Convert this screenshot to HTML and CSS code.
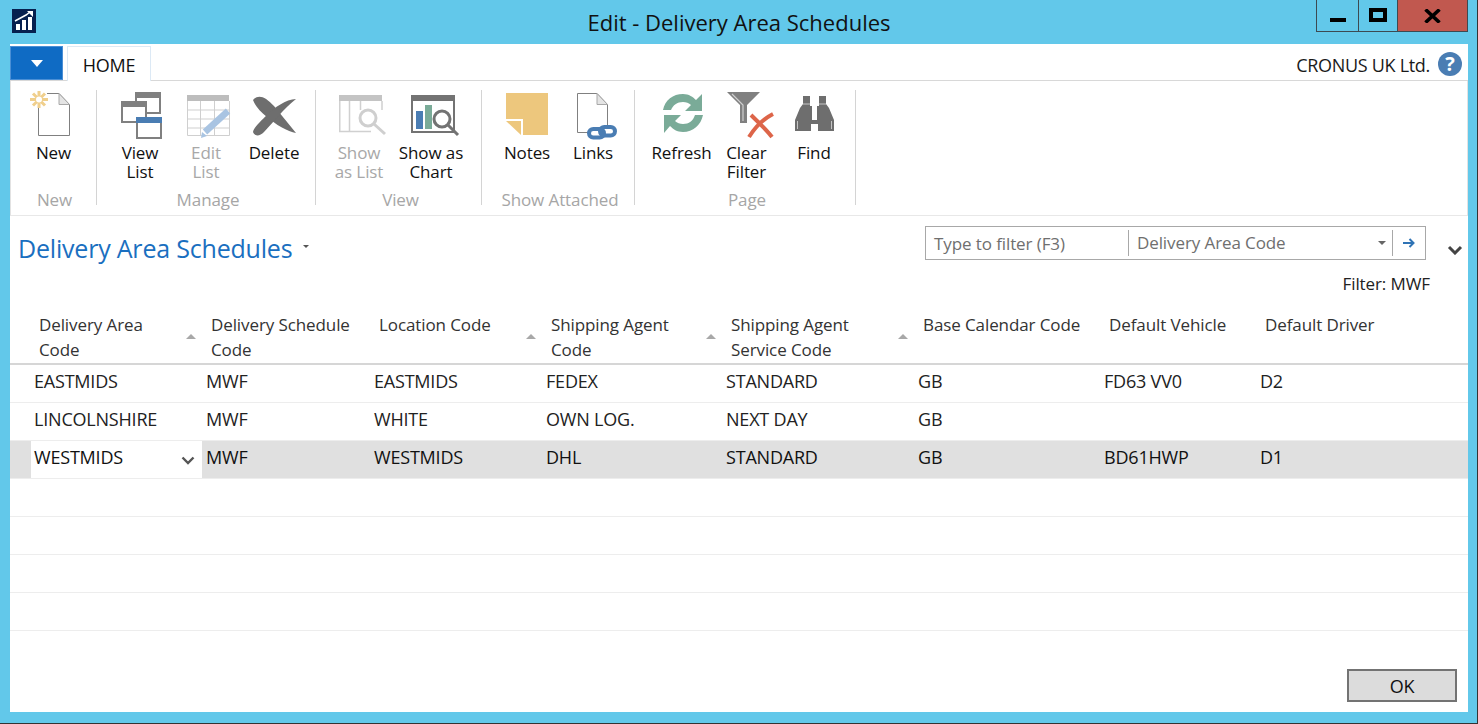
FILE: index.html
```html
<!DOCTYPE html>
<html lang="en">
<head>
  <meta charset="UTF-8" />
  <title>Edit - Delivery Area Schedules</title>
  <link rel="stylesheet" href="styles.css">
</head>
<body>

  <!-- Title bar -->
  <header class="titlebar">
    <svg class="app-icon" width="24" height="24" viewBox="0 0 24 24">
      <rect width="24" height="24" fill="#06204f"/>
      <path d="M4 21v-6h4v6zM10 21V11h4v10zM16 21V8h4v13z" fill="#fff"/>
      <path d="M3 12L14 6l4-3" fill="none" stroke="#fff" stroke-width="1.5"/>
      <path d="M15 2h6v6z" fill="#fff"/>
    </svg>
    <h1 class="title">Edit - Delivery Area Schedules</h1>
    <div class="win-controls">
      <div class="win-btn win-min"><span class="min-glyph"></span></div>
      <div class="win-btn win-max"><span class="max-glyph"></span></div>
      <div class="win-btn win-close">
        <svg width="17" height="14" viewBox="0 0 17 14"><path d="M1.500 0.500L15.500 13.500M15.500 0.500L1.500 13.500" stroke="#000" stroke-width="3.600" fill="none"/></svg>
      </div>
    </div>
  </header>

  <div class="window">

    <!-- Tabs -->
    <div class="tabs">
      <div class="app-btn"><span class="app-caret"></span></div>
      <div class="tab">HOME</div>
      <div class="company">CRONUS UK Ltd.</div>
      <div class="help">?</div>
    </div>

    <!-- Ribbon -->
    <div class="ribbon">

      <section class="group group-new">
        <div class="actions">
          <div class="action">
            <svg class="icon" width="48" height="48" viewBox="0 0 48 48">
              <path d="M8.500 14V45.500H39.500V14.500L29 3.500H17" fill="#fff" stroke="#808080"/>
              <path d="M29 3.500V14.500H39.500z" fill="#e4e4e4" stroke="#a8a8a8"/>
              <g stroke="#f0cf8c" stroke-width="3" fill="none">
                <path d="M9 1V18M0 9.500H18M3 3.500L15 15.500M15 3.500L3 15.500"/>
              </g>
              <circle cx="9" cy="9.500" r="3" fill="#fff"/>
            </svg>
            <span class="label">New</span>
          </div>
        </div>
        <div class="group-name">New</div>
      </section>

      <section class="group group-manage">
        <div class="actions">
          <div class="action action-view">
            <svg class="icon" width="48" height="48" viewBox="0 0 48 48">
              <rect x="20" y="3" width="24" height="20" fill="#fff" stroke="#808080" stroke-width="2"/>
              <rect x="19" y="2" width="26" height="6" fill="#808080"/>
              <rect x="6" y="12" width="24" height="20" fill="#fff" stroke="#808080" stroke-width="2"/>
              <rect x="5" y="11" width="26" height="6" fill="#808080"/>
              <rect x="21" y="28" width="24" height="20" fill="#fff" stroke="#808080" stroke-width="2"/>
              <rect x="20" y="27" width="26" height="6" fill="#4a7db3"/>
            </svg>
            <span class="label">View<br>List</span>
          </div>
          <div class="action action-edit off">
            <svg class="icon" width="48" height="48" viewBox="0 0 48 48">
              <rect x="5" y="5" width="42" height="6" fill="#bdbdbd"/>
              <path d="M5.500 11V45.500H47.500V11M5.500 20H47.500M5.500 29H47.500M5.500 38H47.500M18.500 11V45.500M32.500 11V45.500" fill="none" stroke="#cfcfcf"/>
              <path d="M23 42L46 21" stroke="#a9c4e2" stroke-width="6.500" fill="none"/>
              <path d="M19 48l1-6 5 4z" fill="#a9c4e2"/>
            </svg>
            <span class="label">Edit<br>List</span>
          </div>
          <div class="action action-delete">
            <svg class="icon" width="48" height="48" viewBox="0 0 48 48">
              <path d="M3 10C8 4 15 6 24 16L46 43C38 42 25 34 17 27C11 22 5 16 3 10z" fill="#6e6e6e"/>
              <path d="M46 9C36 9 24 18 17 25C11 31 4 37 3 42C5 47 10 46 14 42C23 33 34 18 46 9z" fill="#6e6e6e"/>
            </svg>
            <span class="label">Delete</span>
          </div>
        </div>
        <div class="group-name">Manage</div>
      </section>

      <section class="group group-view">
        <div class="actions">
          <div class="action action-show off">
            <svg class="icon" width="48" height="48" viewBox="0 0 48 48">
              <rect x="4" y="5" width="43" height="6" fill="#c4c4c4"/>
              <path d="M4.750 11V41.500H36M47 11V20M14.500 11V41.500M25.500 11V20" fill="none" stroke="#d0d0d0" stroke-width="1.500"/>
              <circle cx="33" cy="28" r="8" fill="#fff" stroke="#cfcfcf" stroke-width="3"/>
              <path d="M39 34L50 44" stroke="#cfcfcf" stroke-width="3"/>
            </svg>
            <span class="label">Show<br>as List</span>
          </div>
          <div class="action action-chart">
            <svg class="icon" width="48" height="48" viewBox="0 0 48 48">
              <rect x="5" y="6" width="42" height="36" fill="#fff" stroke="#737373" stroke-width="2"/>
              <rect x="4" y="5" width="44" height="6" fill="#737373"/>
              <rect x="9" y="21" width="7" height="18" fill="#4a7db3"/>
              <rect x="18" y="15" width="7" height="24" fill="#7aab98"/>
              <circle cx="35" cy="29" r="8" fill="#fff" stroke="#737373" stroke-width="3"/>
              <path d="M41 35L51 45" stroke="#737373" stroke-width="3"/>
            </svg>
            <span class="label">Show as<br>Chart</span>
          </div>
        </div>
        <div class="group-name">View</div>
      </section>

      <section class="group group-attached">
        <div class="actions">
          <div class="action action-notes">
            <svg class="icon" width="48" height="48" viewBox="0 0 48 48">
              <path d="M3 3H45V45H20V29H3z" fill="#edc77d"/>
              <path d="M3 31H18V45z" fill="#edc77d"/>
            </svg>
            <span class="label">Notes</span>
          </div>
          <div class="action action-links">
            <svg class="icon" width="48" height="48" viewBox="0 0 48 48">
              <path d="M8.500 3.500H28L38.500 14.500V36M8.500 3.500V42.500H20" fill="#fff" stroke="#808080"/>
              <path d="M28 3.500V14.500H38.500z" fill="#e4e4e4" stroke="#a8a8a8"/>
              <rect x="20" y="39" width="15" height="8.500" rx="4.250" fill="none" stroke="#4a7db3" stroke-width="4"/>
              <rect x="31" y="37" width="15" height="8.500" rx="4.250" fill="none" stroke="#4a7db3" stroke-width="4"/>
            </svg>
            <span class="label">Links</span>
          </div>
        </div>
        <div class="group-name">Show Attached</div>
      </section>

      <section class="group group-page">
        <div class="actions">
          <div class="action action-refresh">
            <svg class="icon" width="48" height="48" viewBox="0 0 48 48">
              <path d="M5 20C7 10 15 4 25 4C31 4 35 7 38 10L44 4V21H27L33 15C31 13 28 12 25 12C19 12 15 15 13 20z" fill="#7aab98"/>
              <path d="M45 25C43 35 35 42 25 42C19 42 15 39 12 36L6 43V25H23L17 31C19 33 22 34 25 34C31 34 35 31 37 25z" fill="#7aab98"/>
            </svg>
            <span class="label">Refresh</span>
          </div>
          <div class="action action-clear">
            <svg class="icon" width="48" height="48" viewBox="0 0 48 48">
              <path d="M4 2H37L24 15V33H17V15z" fill="#808080"/>
              <path d="M9 4L20 15V31" fill="none" stroke="#cfcfcf" stroke-width="1.200"/>
              <path d="M26 47C31 39 40 29 50 24M28 25C35 32 43 39 49 47" stroke="#dd6549" stroke-width="4" fill="none"/>
            </svg>
            <span class="label">Clear<br>Filter</span>
          </div>
          <div class="action action-find">
            <svg class="icon" width="48" height="48" viewBox="0 0 48 48">
              <path d="M13 6H20V16H22V30H27V16H29V6H36V14L39 18L44 30V41H28V34H21V41H5V30L10 18L13 14z" fill="#6e6e6e"/>
              <path d="M7.500 31V39M41.500 31V39M13 14H20M29 14H36" stroke="#c4c4c4" stroke-width="1"/>
            </svg>
            <span class="label">Find</span>
          </div>
        </div>
        <div class="group-name">Page</div>
      </section>

    </div>

    <!-- Page heading and filter -->
    <div class="pagehead">
      <h2 class="heading">Delivery Area Schedules</h2>
      <span class="heading-caret"></span>
      <div class="filterbox">
        <div class="filter-input">Type to filter (F3)</div>
        <div class="filter-field">Delivery Area Code<span class="field-caret"></span></div>
        <div class="filter-go">
          <svg width="12" height="10" viewBox="0 0 12 10"><path d="M0 5H10M6.500 1L10.500 5L6.500 9" fill="none" stroke="#2f73b5" stroke-width="2"/></svg>
        </div>
      </div>
      <svg class="collapse" width="16" height="10" viewBox="0 0 16 10"><path d="M2 2L8 8L14 2" fill="none" stroke="#444" stroke-width="3"/></svg>
    </div>
    <div class="filter-note">Filter: MWF</div>

    <!-- List -->
    <div class="list">
      <div class="row head">
        <div></div>
        <div class="hcell">Delivery Area<br>Code<span class="sort"></span></div>
        <div class="hcell">Delivery Schedule<br>Code</div>
        <div class="hcell">Location Code<span class="sort"></span></div>
        <div class="hcell">Shipping Agent<br>Code<span class="sort"></span></div>
        <div class="hcell">Shipping Agent<br>Service Code<span class="sort"></span></div>
        <div class="hcell">Base Calendar Code</div>
        <div class="hcell">Default Vehicle</div>
        <div class="hcell">Default Driver</div>
      </div>
      <div class="row">
        <div></div><div class="cell">EASTMIDS</div><div class="cell">MWF</div><div class="cell">EASTMIDS</div><div class="cell">FEDEX</div><div class="cell">STANDARD</div><div class="cell">GB</div><div class="cell">FD63 VV0</div><div class="cell">D2</div>
      </div>
      <div class="row">
        <div></div><div class="cell">LINCOLNSHIRE</div><div class="cell">MWF</div><div class="cell">WHITE</div><div class="cell">OWN LOG.</div><div class="cell">NEXT DAY</div><div class="cell">GB</div><div class="cell"></div><div class="cell"></div>
      </div>
      <div class="row selected">
        <div></div>
        <div class="cell cell-edit">WESTMIDS
          <svg width="14" height="9" viewBox="0 0 14 9"><path d="M1.500 1.500L7 7L12.500 1.500" fill="none" stroke="#555" stroke-width="2.400"/></svg>
        </div>
        <div class="cell">MWF</div><div class="cell">WESTMIDS</div><div class="cell">DHL</div><div class="cell">STANDARD</div><div class="cell">GB</div><div class="cell">BD61HWP</div><div class="cell">D1</div>
      </div>
      <div class="row"></div>
      <div class="row"></div>
      <div class="row"></div>
      <div class="row"></div>
    </div>

    <div class="footer">
      <button class="ok" type="button">OK</button>
    </div>
  </div>

</body>
</html>
```

FILE: styles.css
```css
* { box-sizing: border-box; margin: 0; padding: 0; }
html, body { height: 724px; overflow: hidden; }
body {
  background: #62c8ea;
  border-right: 1px solid #333;
  border-bottom: 1px solid #333;
  font-family: "Open Sans", "Noto Sans", sans-serif;
  font-size: 17px;
  letter-spacing: -0.1px;
  color: #1a1a1a;
}

/* Title bar */
.titlebar { height: 44px; display: flex; padding-left: 12px; }
.app-icon { margin-top: 9px; }
.title {
  flex: 1;
  font-size: 22px;
  font-weight: 400;
  letter-spacing: 0;
  text-align: center;
  line-height: 45px;
  color: #111;
  padding-left: 126px;
}
.win-controls {
  display: flex;
  height: 32px;
  margin-right: 9px;
  border: 1px solid #3c4a52;
  border-top: 0;
}
.win-btn { display: flex; align-items: center; justify-content: center; border-left: 1px solid #3c4a52; }
.win-btn:first-child { border-left: 0; }
.win-min { width: 41px; }
.win-max { width: 39px; }
.win-close { width: 70px; background: #c1584f; }
.min-glyph { width: 16px; height: 4px; background: #000; margin-top: 8px; }
.max-glyph { width: 18px; height: 14px; border: 4px solid #000; margin-top: -1px; }

/* Window body */
.window { margin: 0 9px 0 10px; height: 668px; background: #fff; }

.tabs { height: 37px; display: flex; align-items: flex-end; border-bottom: 1px solid #d8d8d8; }
.app-btn {
  width: 53px;
  height: 34px;
  background: #0f6bc4;
  border: 1px solid #4a8fd6;
  display: flex;
  align-items: center;
  justify-content: center;
}
.app-caret { border-left: 6px solid transparent; border-right: 6px solid transparent; border-top: 7px solid #fff; }
.tab {
  width: 84px;
  height: 35px;
  margin-left: 4px;
  margin-bottom: -1px;
  background: #fff;
  border: 1px solid #dce9f5;
  border-bottom: 0;
  text-align: center;
  line-height: 37px;
  font-size: 18px;
  letter-spacing: -0.2px;
  color: #111;
}
.company { margin-left: auto; margin-right: 8px; line-height: 34px; margin-bottom: -2px; font-size: 18px; letter-spacing: -0.3px; }
.help {
  width: 24px;
  height: 24px;
  margin: 0 6px 4px 0;
  border-radius: 50%;
  background: #4a7db3;
  color: #fff;
  font-size: 20px;
  font-weight: 700;
  line-height: 24px;
  text-align: center;
}

/* Ribbon */
.ribbon {
  height: 135px;
  display: flex;
  border-left: 1px solid #e2e2e2;
  border-right: 1px solid #e2e2e2;
  border-bottom: 1px solid #e8e8e8;
  padding-top: 9px;
}
.group { display: flex; flex-direction: column; height: 115px; border-right: 1px solid #d4d4d4; }
.group-new { width: 86px; }
.group-manage { width: 219px; }
.group-view { width: 166px; }
.group-attached { width: 153px; }
.group-page { width: 221px; }
.actions { height: 99px; flex: none; display: flex; }
.action { display: flex; flex-direction: column; align-items: center; }
.group-new .action { width: 88px; }
.action-view { width: 66px; margin-left: 10px; }
.action-edit { width: 66px; }
.action-delete { width: 70px; }
.action-show { width: 72px; margin-left: 7px; }
.action-chart { width: 72px; }
.action-notes { width: 66px; margin-left: 12px; }
.action-links { width: 66px; }
.action-refresh { width: 65px; margin-left: 14px; }
.action-clear { width: 65px; }
.action-find { width: 70px; }
.icon { flex: none; overflow: visible; }
.label { text-align: center; line-height: 19px; margin-top: 5px; color: #111; white-space: nowrap; }
.off .label { color: #a8a8a8; }
.group-name { flex: none; text-align: center; color: #a6a6a6; line-height: 22px; padding-left: 4px; }
.group-new .group-name { padding-left: 2px; }

/* Page heading */
.pagehead { height: 64px; display: flex; align-items: flex-start; padding-left: 8px; }
.heading {
  font-size: 25px;
  font-weight: 400;
  color: #1a6fc0;
  line-height: 34px;
  margin-top: 15px;
  letter-spacing: -0.2px;
}
.heading-caret {
  margin: 29px 0 0 11px;
  border-left: 3px solid transparent;
  border-right: 3px solid transparent;
  border-top: 3px solid #555;
}
.filterbox {
  width: 501px;
  height: 34px;
  margin: 10px 0 0 auto;
  border: 1px solid #a8a8a8;
  display: flex;
  align-items: center;
  color: #6f6f6f;
}
.filter-input { width: 202px; padding-left: 8px; }
.filter-field {
  width: 265px;
  height: 26px;
  line-height: 24px;
  padding-left: 8px;
  border-left: 1px solid #a8a8a8;
  border-right: 1px solid #a8a8a8;
  display: flex;
  align-items: center;
}
.field-caret {
  margin-left: auto;
  margin-right: 6px;
  border-left: 4px solid transparent;
  border-right: 4px solid transparent;
  border-top: 4px solid #666;
}
.filter-go { flex: 1; display: flex; justify-content: center; }
.collapse { margin: 29px 5px 0 21px; }
.filter-note { text-align: right; padding-right: 38px; line-height: 22px; height: 37px; margin-top: -7px; color: #222; }

/* List */
.row {
  display: grid;
  grid-template-columns: 20px 172px 168px 172px 180px 192px 186px 156px 212px;
  height: 38px;
  border-bottom: 1px solid #ededed;
}
.head { height: 55px; border-bottom: 2px solid #d6d6d6; }
.hcell { position: relative; padding: 2px 0 0 9px; line-height: 25px; color: #333; white-space: nowrap; }
.sort {
  position: absolute;
  right: 6px;
  top: 24px;
  border-left: 5px solid transparent;
  border-right: 5px solid transparent;
  border-bottom: 5px solid #a8a8a8;
}
.cell { padding-left: 4px; line-height: 33px; font-size: 18px; letter-spacing: -0.2px; color: #222; white-space: nowrap; }
.selected { background: #e0e0e0; }
.selected .cell { color: #111; }
.cell-edit { background: #fff; margin-left: 1px; padding-left: 3px; display: flex; align-items: flex-start; justify-content: space-between; padding-right: 7px; }
.cell-edit svg { margin-top: 15px; }

.footer { display: flex; justify-content: flex-end; padding: 38px 11px 0 0; }
.ok {
  width: 110px;
  height: 33px;
  background: #dcdcdc;
  border: 2px solid #737373;
  font: inherit;
  font-size: 18px;
  letter-spacing: -0.2px;
  color: #111;
}
```
